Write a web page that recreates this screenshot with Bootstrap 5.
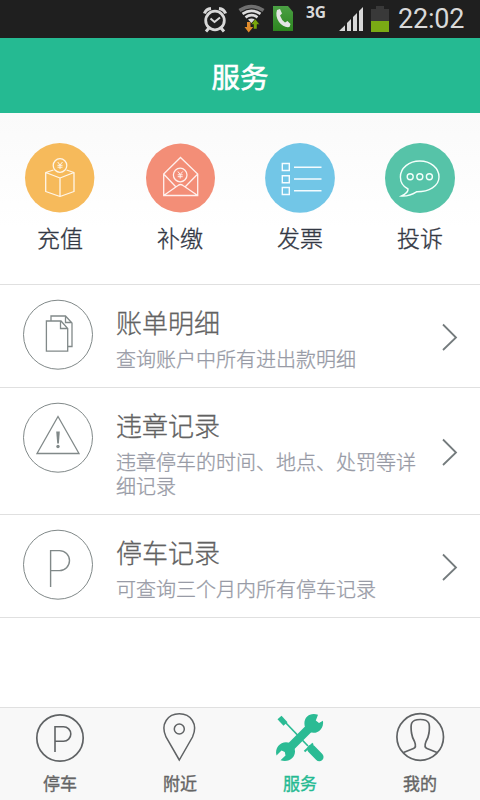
<!DOCTYPE html>
<html lang="zh-CN">
<head>
<meta charset="utf-8">
<meta name="viewport" content="width=device-width, initial-scale=1">
<title>服务</title>
<link href="https://cdn.jsdelivr.net/npm/bootstrap@5.3.0/dist/css/bootstrap.min.css" rel="stylesheet">
<style>
body{font-family:"Noto Sans CJK SC",sans-serif;height:800px;overflow:hidden}
svg{display:block;flex:none;fill:none;overflow:visible}
.status-bar{height:38px;background:#1f1f1f;color:#d9d9d9}
.net-type{font:700 15.500px/16px "Noto Sans","Open Sans",sans-serif;width:20px;margin:4px 13px 0 12px}
.clock{font:400 27px/38px Roboto,sans-serif;width:67px;margin-left:8px;margin-right:15px;white-space:nowrap;letter-spacing:-.2px}
.title-bar{height:75px;background:#25ba92;font-size:28.5px;line-height:75px;font-weight:400;-webkit-text-stroke:.6px currentColor}
.services{height:172px;padding-top:30px;background:linear-gradient(#fafafa,#fff 115px);border-bottom:1px solid #e0e0e0}
.service-label{font-size:23px;line-height:34px;margin-top:7px;color:#333844;font-weight:300;-webkit-text-stroke:.35px currentColor}
.menu-row{padding:15px 22px 16px 23px;border-bottom:1px solid #e0e0e0}
.menu-text{margin-left:23px;padding-top:4px;width:306px;font-weight:300;-webkit-text-stroke:.3px currentColor}
.menu-title{font-size:26px;line-height:36px;color:#626262}
.menu-desc{font-size:20px;line-height:24px;margin-top:7px;color:#989ba6}
.chevron{margin-top:3px}
.tabs{height:93px;background:#f8f8f8;border-top:1px solid #e0e0e0;color:#656565}
.tab-label{font-size:17px;line-height:24px;font-weight:400;margin-top:7px;-webkit-text-stroke:.35px currentColor}
.tab-on{color:#25ba92}
.gray-line{stroke:#818989}
</style>
<script src="https://cdn.jsdelivr.net/npm/bootstrap@5.3.0/dist/js/bootstrap.bundle.min.js"></script>
</head>
<body class="bg-white d-flex flex-column">
<header>
<div class="status-bar d-flex justify-content-end">
<svg width="30" height="38" viewBox="200 0 30 38" stroke="#d8d8d8"><circle cx="215" cy="20.500" r="9.300" stroke-width="2.800"/><path d="M210.500 18.500L214.500 22L220 17.500" stroke-width="2"/><path d="M204.500 13.500Q206 9 211 8.500M219 8.500Q224 9 225.500 13.500" stroke-width="3.200"/><path d="M209 28l-3 3.500M221 28l3 3.500" stroke-width="3"/></svg>
<svg width="40" height="38" viewBox="230 0 40 38"><path d="M239.500 10.500Q251.500 2.500 263.500 10.500" stroke="#707070" stroke-width="3.600"/><path d="M242.500 13.800Q251.500 7.800 260.500 13.800M245.500 17.300Q251.500 13 257.500 17.300" stroke="#ddd" stroke-width="2.700"/><path d="M248 19.500Q251.500 17.500 255 19.500L251.500 23Z" fill="#ddd"/><path d="M247 22h3.500v5h2.700L248.700 32.500L244.500 27h2.500z" fill="#e08b2c"/><path d="M253.500 29h3.500v-4.500h2.700L255.300 19L251 24.500h2.500z" fill="#79a80b" stroke="#1f1f1f" stroke-width=".5"/></svg>
<svg width="24" height="38" viewBox="270 0 24 38"><defs><linearGradient id="callGreen" x2="0" y2="1"><stop stop-color="#4ba044"/><stop offset="1" stop-color="#2c851f"/></linearGradient></defs><path d="M273 6h15l5 6v19h-20z" fill="url(#callGreen)"/><path d="M277 10l3-1 2 4.500-2 2q1.500 4.500 5 7l2.500-1.500 3 3-1 3q-6 1-10.500-5-4-6-2-12z" fill="#e5e5e5"/></svg>
<div class="net-type">3G</div>
<svg width="26" height="38" viewBox="339 0 26 38"><path fill="#d8d8d8" d="M339 31l6-5.800v5.800zM347 31v-8l4-4v12zM353 31v-14l4-4v18zM359 31v-20l4-4v24z"/></svg>
<svg width="25" height="38" viewBox="365 0 25 38"><path d="M371 9h5V6h8v3h5v12h-18z" fill="#393939"/><path d="M371 21h18v11h-18z" fill="#7aaa14"/></svg>
<div class="clock">22:02</div>
</div>
<h1 class="title-bar text-white text-center m-0">服务</h1>
</header>
<main class="flex-grow-1">
<section class="services d-flex text-center">
<div class="col-3"><svg class="mx-auto" width="70" height="70" viewBox="25 143 70 70"><circle cx="59.700" cy="177.700" r="34.700" fill="#f6ba5b"/><g stroke="#fff6e8" stroke-width="1.300" stroke-linejoin="round"><path d="M53.500 170L45.700 172.500V191.500L60 196.500L74 191.500V172.500L66.500 170M45.700 172.500L60 178L74 172.500M60 178V196.500"/><circle cx="60" cy="165.500" r="6.800"/><path stroke-width="1" d="M57.700 162L60 165L62.500 162M60 165V169M57.500 165.300h5M57.500 167.200h5"/></g></svg><div class="service-label">充值</div></div>
<div class="col-3"><svg class="mx-auto" width="70" height="70" viewBox="145 143 70 70"><circle cx="180.500" cy="178" r="34.500" fill="#f38e77"/><g stroke="#fff0ed" stroke-width="1.300"><path d="M163.700 174L180.500 157.500L197.700 174V195.500H163.700ZM163.700 174L175.500 186.500M197.700 174L185.500 186.500M163.700 195.500L178 185.500Q180.500 183.500 183 185.500L197.700 195.500"/><circle cx="180.200" cy="175" r="6.800"/><path stroke-width="1" d="M177.900 171.500L180.200 174.500L182.700 171.500M180.200 174.500V178.500M177.700 174.800h5M177.700 176.700h5"/></g></svg><div class="service-label">补缴</div></div>
<div class="col-3"><svg class="mx-auto" width="70" height="70" viewBox="265 143 70 70"><circle cx="300" cy="177.900" r="34.900" fill="#72c6e7"/><g stroke="#f5fcff" stroke-width="1.400"><path d="M282.300 163.500h7v7h-7zM282.300 175.700h7v7h-7zM282.300 187.500h7v7h-7zM294 167.200h27.500M294 179h27.500M294 190.800h27.500"/></g></svg><div class="service-label">发票</div></div>
<div class="col-3"><svg class="mx-auto" width="70" height="70" viewBox="385 143 70 70"><circle cx="420" cy="178" r="35" fill="#56c3a8"/><g stroke="#f4fffb" stroke-width="1.400"><path d="M408 189C402 186 400.400 181 400.400 177C400.400 168 409 161 419.800 161S439 168 439 177S429 192 416.500 191.800Q409 196.500 401.500 196Q408.500 192.500 408 189Z"/><circle cx="410.200" cy="176.800" r="3"/><circle cx="419.800" cy="176.800" r="3"/><circle cx="429.400" cy="176.800" r="3"/></g></svg><div class="service-label">投诉</div></div>
</section>
<section>
<div class="menu-row d-flex"><svg width="70" height="70" viewBox="23 300 70 70" class="gray-line"><circle cx="58" cy="334.700" r="34.500" stroke-width="1"/><path d="M46.400 321H61L67.700 328.500V351.200H46.400ZM60.500 321V328.500H67.700M51 320.500V316H65.500L72 323V346.500H68M65.500 316V322.500H72" stroke-width="1.300"/></svg>
<div class="menu-text"><div class="menu-title">账单明细</div><div class="menu-desc">查询账户中所有进出款明细</div></div>
<svg class="chevron ms-auto align-self-center" width="18" height="30" viewBox="0 0 18 30"><path d="M3 2.500L16 15.500L3 28" stroke="#747b7d" stroke-width="1.800"/></svg></div>
<div class="menu-row d-flex"><svg width="70" height="70" viewBox="23 403 70 70" class="gray-line"><circle cx="58" cy="437.700" r="34.500" stroke-width="1"/><path d="M58 416.500L79 453.500H37Z" stroke-width="1.300"/><path d="M56.200 431.500h3.600l-.9 12h-1.700z" fill="#818989" stroke="none"/><circle cx="58" cy="446.500" r="1.700" fill="#818989" stroke="none"/></svg>
<div class="menu-text"><div class="menu-title">违章记录</div><div class="menu-desc">违章停车的时间、地点、处罚等详细记录</div></div>
<svg class="chevron ms-auto align-self-center" width="18" height="30" viewBox="0 0 18 30"><path d="M3 2.500L16 15.500L3 28" stroke="#747b7d" stroke-width="1.800"/></svg></div>
<div class="menu-row d-flex"><svg width="70" height="70" viewBox="23 530 70 70" class="gray-line"><circle cx="58" cy="564.700" r="34.500" stroke-width="1"/><path d="M50.600 587V550.600H59.500A10 10 0 0 1 59.500 570.600H50.600" stroke-width="1.400"/></svg>
<div class="menu-text"><div class="menu-title">停车记录</div><div class="menu-desc">可查询三个月内所有停车记录</div></div>
<svg class="chevron ms-auto align-self-center" width="18" height="30" viewBox="0 0 18 30"><path d="M3 2.500L16 15.500L3 28" stroke="#747b7d" stroke-width="1.800"/></svg></div>
</section>
</main>
<nav class="tabs d-flex text-center">
<div class="col-3"><svg class="mx-auto" width="60" height="56" viewBox="30 708 60 56" stroke="#606365"><circle cx="60" cy="738" r="23.200" stroke-width="1.700"/><path d="M55 752V726.700H63.500A7 7 0 0 1 63.500 741.300H55" stroke-width="1.600"/></svg><div class="tab-label">停车</div></div>
<div class="col-3"><svg class="mx-auto" width="60" height="56" viewBox="150 708 60 56" stroke="#606365" stroke-width="1.500"><path d="M179.300 760L166 737C160 724 168 713.800 179.300 713.800S198.500 724 192.500 737Z"/><circle cx="179.300" cy="729" r="5"/></svg><div class="tab-label">附近</div></div>
<div class="col-3 tab-on"><svg class="mx-auto" width="60" height="56" viewBox="270 708 60 56"><g stroke="#2bbb94"><path d="M285 722L308 746" stroke-width="1.700"/><path d="M279.500 717.500L285.500 724" stroke-width="5.500"/><path d="M311.500 749L319.300 757" stroke-width="8.500" stroke-linecap="round"/><path d="M304.500 751.500L313 743.500" stroke-width="2"/><path d="M288 749.500L312 725.500" stroke-width="8.500"/></g><path fill="#2bbb94" d="M318 714.700L315.800 720.500L319 723L323 720.700C324 728 319 732.800 313.500 732.800C308 732.800 304.400 728.500 304.400 723.300C304.400 717 310 712.200 318 714.700ZM280.500 760.300L285.500 755.500L284.800 752L281.500 750.500L276.500 755.500C274.500 748 280 742.300 286 742.300C291.500 742.300 295 746.500 295 751.500C295 757.500 289 763 280.500 760.300Z"/></svg><div class="tab-label">服务</div></div>
<div class="col-3"><svg class="mx-auto" width="60" height="56" viewBox="390 708 60 56" stroke="#606365" stroke-width="1.700"><circle cx="420.200" cy="737" r="23.300"/><path d="M403.500 752.500L413.500 748.500C416 747.500 415.500 744 414.500 741.500C412.500 738.500 412 736 411.500 733C410.500 725 410 719.500 420.200 719.500S430 725 429 733C428.500 736 428 738.500 426 741.500C425 744 424.500 747.500 427 748.500L437 752.500"/></svg><div class="tab-label">我的</div></div>
</nav>
</body>
</html>
